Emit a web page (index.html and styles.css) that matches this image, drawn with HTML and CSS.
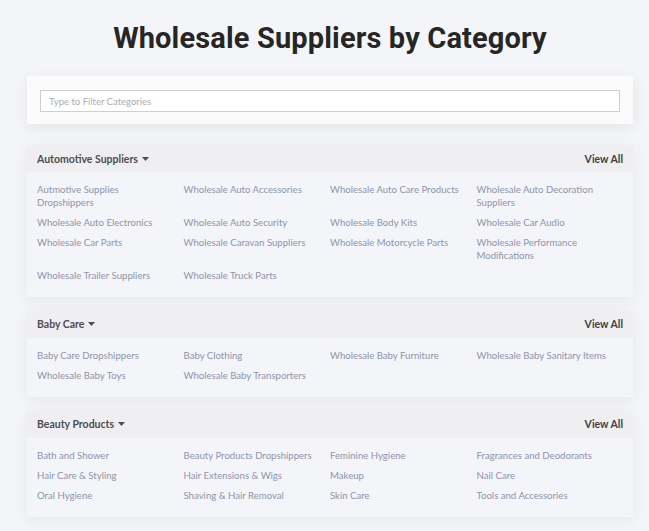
FILE: index.html
```html
<!DOCTYPE html>
<html lang="en">
<head>
<meta charset="utf-8">
<title>Wholesale Suppliers by Category</title>
<link rel="stylesheet" href="styles.css">
</head>
<body>
<div class="page">
  <h1 class="title">Wholesale Suppliers by Category</h1>
  <div class="search-card">
    <input class="search-input" type="text" placeholder="Type to Filter Categories">
  </div>

  <section class="cat">
    <div class="cat-head">
      <span class="cat-name">Automotive Suppliers <svg class="caret" width="7" height="4" viewBox="0 0 7 4"><path d="M0 0h7L3.5 4z"/></svg></span>
      <a class="view-all" href="#">View All</a>
    </div>
    <div class="cat-body">
      <a href="#">Autmotive Supplies Dropshippers</a>
      <a href="#">Wholesale Auto Accessories</a>
      <a href="#">Wholesale Auto Care Products</a>
      <a href="#">Wholesale Auto Decoration Suppliers</a>
      <a href="#">Wholesale Auto Electronics</a>
      <a href="#">Wholesale Auto Security</a>
      <a href="#">Wholesale Body Kits</a>
      <a href="#">Wholesale Car Audio</a>
      <a href="#">Wholesale Car Parts</a>
      <a href="#">Wholesale Caravan Suppliers</a>
      <a href="#">Wholesale Motorcycle Parts</a>
      <a href="#">Wholesale Performance Modifications</a>
      <a href="#">Wholesale Trailer Suppliers</a>
      <a href="#">Wholesale Truck Parts</a>
    </div>
  </section>

  <section class="cat">
    <div class="cat-head">
      <span class="cat-name">Baby Care <svg class="caret" width="7" height="4" viewBox="0 0 7 4"><path d="M0 0h7L3.5 4z"/></svg></span>
      <a class="view-all" href="#">View All</a>
    </div>
    <div class="cat-body">
      <a href="#">Baby Care Dropshippers</a>
      <a href="#">Baby Clothing</a>
      <a href="#">Wholesale Baby Furniture</a>
      <a href="#">Wholesale Baby Sanitary Items</a>
      <a href="#">Wholesale Baby Toys</a>
      <a href="#">Wholesale Baby Transporters</a>
    </div>
  </section>

  <section class="cat">
    <div class="cat-head">
      <span class="cat-name">Beauty Products <svg class="caret" width="7" height="4" viewBox="0 0 7 4"><path d="M0 0h7L3.5 4z"/></svg></span>
      <a class="view-all" href="#">View All</a>
    </div>
    <div class="cat-body">
      <a href="#">Bath and Shower</a>
      <a href="#">Beauty Products Dropshippers</a>
      <a href="#">Feminine Hygiene</a>
      <a href="#">Fragrances and Deodorants</a>
      <a href="#">Hair Care &amp; Styling</a>
      <a href="#">Hair Extensions &amp; Wigs</a>
      <a href="#">Makeup</a>
      <a href="#">Nail Care</a>
      <a href="#">Oral Hygiene</a>
      <a href="#">Shaving &amp; Hair Removal</a>
      <a href="#">Skin Care</a>
      <a href="#">Tools and Accessories</a>
    </div>
  </section>
</div>
</body>
</html>
```

FILE: styles.css
```css
html, body {
  margin: 0;
  padding: 0;
  background: #f4f5f8;
}
body {
  font-family: "Lato", "Liberation Sans", sans-serif;
  color: #333;
}
.page {
  width: 606px;
  margin-left: 27px;
  padding-bottom: 20px;
}
.title {
  font-family: "Roboto", "Liberation Sans", sans-serif;
  font-weight: 700;
  font-size: 29px;
  line-height: 34px;
  color: #262626;
  text-align: center;
  margin: 21px 0 21px;
  letter-spacing: 0.15px;
}
.search-card {
  background: #fbfbfc;
  padding: 14px 13px 12px;
  box-shadow: 0 4px 14px rgba(0, 0, 0, 0.07);
}
.search-input {
  display: block;
  box-sizing: border-box;
  width: 100%;
  height: 22px;
  border: 1px solid #cfcfd2;
  background: #fff;
  padding: 0 8px;
  font-family: "Lato", "Liberation Sans", sans-serif;
  font-size: 9.5px;
  outline: none;
}
.search-input::placeholder {
  color: #abadb5;
}
.cat {
  margin-top: 21px;
  box-shadow: 0 4px 16px rgba(0, 0, 0, 0.06);
}
.cat + .cat {
  margin-top: 14px;
}
.cat-head {
  display: flex;
  justify-content: space-between;
  align-items: center;
  height: 27px;
  padding: 0 10px;
  background: #efeff1;
}
.cat-name {
  font-weight: 700;
  font-size: 10.5px;
  color: #4d4d52;
  display: flex;
  align-items: center;
  gap: 4px;
}
.caret {
  fill: #4d4d52;
}
.view-all {
  font-weight: 700;
  font-size: 10.5px;
  color: #3e3e42;
  text-decoration: none;
}
.cat-body {
  background: #f3f5f9;
  display: grid;
  grid-template-columns: repeat(4, 1fr);
  row-gap: 7px;
  padding: 10.6px 10px 15.4px;
}
.cat-body a {
  font-size: 9.6px;
  line-height: 13px;
  color: #8f94ac;
  text-decoration: none;
  padding-right: 14px;
}
```
